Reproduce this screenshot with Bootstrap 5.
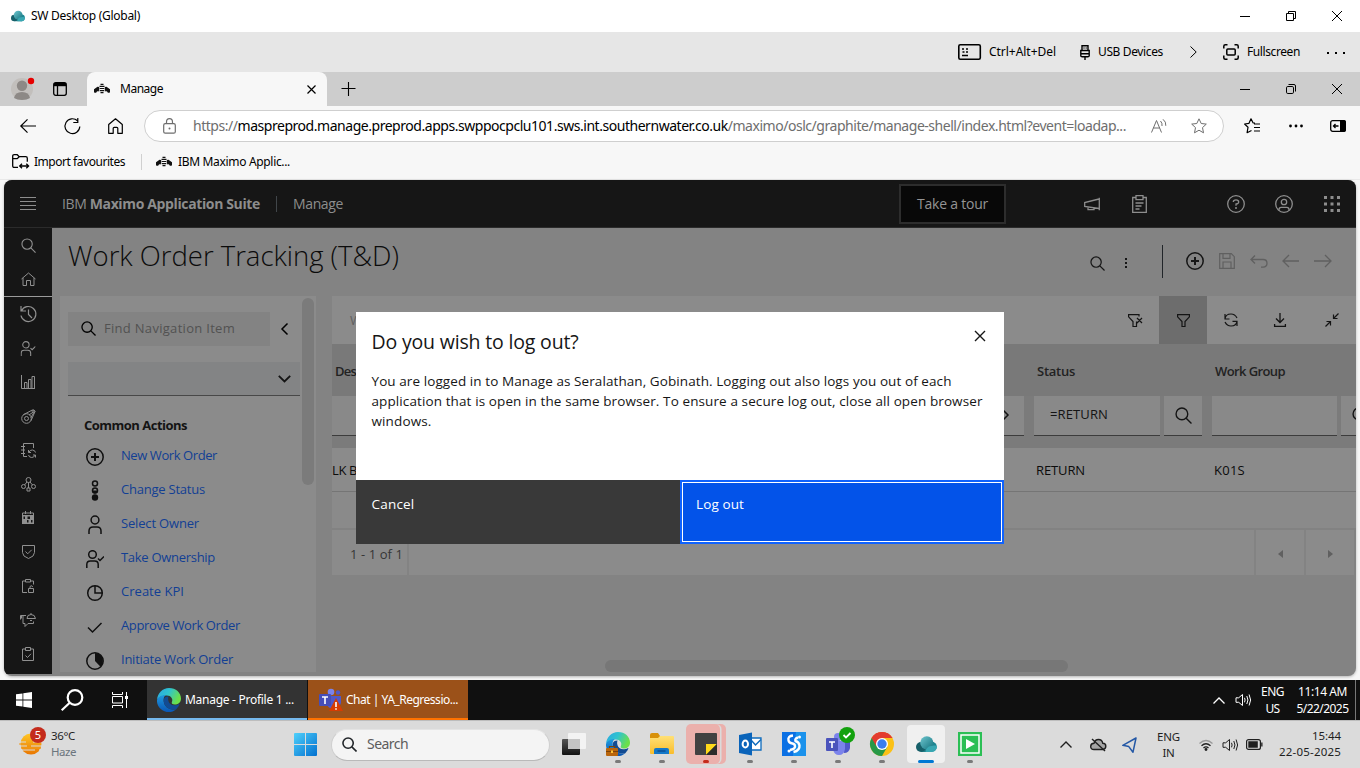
<!DOCTYPE html>
<html lang="en">
<head>
<meta charset="utf-8">
<meta name="viewport" content="width=device-width, initial-scale=1">
<title>SW Desktop (Global)</title>
<link href="https://cdn.jsdelivr.net/npm/bootstrap@5.3.0/dist/css/bootstrap.min.css" rel="stylesheet">
<style>
  body{width:1360px;height:768px;overflow:hidden;background:#f7f7f7;color:#000;font:12px/16px "Noto Sans","Open Sans",sans-serif}
  svg{display:block;flex:none;fill:none;stroke:currentColor;overflow:visible}
  svg .f{fill:currentColor;stroke:none}
  [data-w]{white-space:nowrap;display:inline-block;justify-self:start}
  .bar{display:grid;align-items:center;justify-items:start}
  /* outer client window */
  .client-title{height:32px;background:#fff;grid-template-columns:11px 20px 1191px 46px 46px 46px}
  .client-tools{height:40px;background:#e6e6e6;grid-template-columns:958px 31px 91px 18px 92px 33px 24px 80px 33px}
  .tabs-bar{height:34px;background:#cdcdcd;grid-template-columns:11px 42px 34px 254px 881px 46px 46px 46px}
  .win-btn{justify-self:center}
  .edge-tab{height:34px;width:240px;background:#f7f7f7;border-radius:8px 8px 0 0;display:grid;grid-template-columns:7px 26px 187px 20px;align-items:center}
  .address{height:40px;grid-template-columns:20px 44px 44px 36px 1100px 45px 41px 30px}
  .pill{height:32px;width:1080px;border:1px solid #cfcfcf;border-radius:16px;background:#fff;grid-template-columns:18px 30px 958px 40px 30px;color:#6e6e6e;font-size:14px}
  .favs{height:34px;grid-template-columns:12px 22px 107px 15px 22px 200px;border-bottom:1px solid #e9e9e9;padding-bottom:2px}
  .vsep{width:1px;height:16px;background:#d0d0d0}
  /* Maximo application */
  .suite{margin:0 4px;height:496px;background:#838383;border-radius:8px;overflow:hidden;position:relative;font-family:"Open Sans","Noto Sans",sans-serif;font-size:13px;color:#141414;box-shadow:0 1px 3px #0004}
  .suite-head{height:48px;background:#161616;color:#8d8d8d;border-bottom:1px solid #2b2b2b;font-size:14px;grid-template-columns:16px 42px 214px 17px 606px 185px 48px 95px 48px 49px 32px}
  .tour{width:107px;height:40px;border:2px solid #2d2d2d;background:#080808;padding-left:16px;color:#949494}
  .rail{width:48px;height:446px;background:#161616;color:#909090}
  .rail-slot{height:34px;display:flex;align-items:center;justify-content:center}
  .rail hr{margin:0;border:0;height:1px;background:#9b9b9b;opacity:1}
  .page-head{height:68px;grid-template-columns:16px 1022px 34px 38px 24px 33px 31px 32px 32px 42px;color:#161616;padding-bottom:2px}
  .page-name{font-size:27.5px;font-weight:300;line-height:34px;margin-bottom:10px;color:#0b0b0b}
  .off{color:#606060}
  .nav-panel{width:256px;height:376px;margin-left:8px;background:#8b8b8b;overflow:hidden;padding:0 2px 0 8px}
  .find{width:202px;height:34px;background:#838383;color:#525252;grid-template-columns:13px 23px 166px;padding-bottom:2px}
  .pick{width:232px;height:34px;background:#838485;border-bottom:1px solid #484848;margin-top:16px;padding-right:9px}
  .thumb{width:12px;height:187px;border-radius:6px;background:#7b7b7b;margin-top:2px}
  .acts{height:34px;grid-template-columns:18px 35px 180px;color:#123f94}
  .acts svg{color:#101010;margin-top:3px}
  .grid-area{width:1024px;margin-left:16px;overflow:hidden}
  .t-tools{height:48px;background:#8b8b8b;grid-template-columns:18px 778px 31px 48px 17px 50px 51px 31px}
  .on{width:48px;height:48px;background:#6d6d6d;display:grid;place-items:center}
  .t-head{height:52px;background:#797979;grid-template-columns:3px 702px 178px 141px;font-weight:600;color:#222;padding-top:2px}
  .t-filter{height:52px;background:#7b7b7b;align-items:start;grid-template-columns:692px 10px 130px 48px 129px 20px}
  .cellbox{height:40px;background:#898989;border-bottom:1px solid #3c3c3c;display:flex;align-items:center;padding-bottom:1px}
  .t-row{height:44px;background:#8b8b8b;border-bottom:1px solid #757575;grid-template-columns:704px 178px 142px;color:#0c0c0c}
  .t-gap{height:38px;background:#8a8a8a;border-bottom:2px solid #828282}
  .pager{height:45px;background:#8b8b8b;grid-template-columns:77px 847px 50px 50px;color:#363636}
  .pager>div{border-right:2px solid #838383;height:45px;width:100%;display:flex;align-items:center;padding-top:2px}
  .hthumb{position:absolute;left:601px;top:480px;width:463px;height:12px;border-radius:6px;background:#777}
  .ask{position:absolute;left:352px;top:132px;width:648px;height:232px;background:#fff;color:#161616;z-index:2}
  .ask-body{height:168px;padding:19px 15.5px 0;font-size:13.5px;line-height:20px}
  .ask-title{font-size:19.5px;line-height:22px;margin-bottom:18px}
  .ask-btn{height:64px;color:#fff;font-size:13.5px;padding:14px 0 0 15.5px;line-height:20px;border:0;border-radius:0;text-align:left}
  .ask-no{width:324px;background:#393939}
  .ask-yes{width:324px;background:#0353e9;border:2px solid #0f62fe;box-shadow:inset 0 0 0 1px #fff;padding:12px 0 0 14px}
  /* remote taskbar */
  .remote{margin-top:4px;height:40px;background:#101010;color:#fff;grid-template-columns:16px 45px 51px 35px 161px 905px 22px 26px 34px 60px 5px}
  .task{width:160px;height:40px;background:#333;border-bottom:2px solid #76b9ed;grid-template-columns:10px 28px 122px;padding-top:1px}
  .task-hot{background:#9b5119;border-color:#ff7200;grid-template-columns:11px 27px 122px}
  .two{line-height:17px;text-align:center;width:100%}
  /* local taskbar */
  .local{height:48px;background:#dbdbdb;border-top:1px solid #bdbdbd;color:#1f1f1f;font-size:11.5px;grid-template-columns:17px 34px 243px 37px 221px 508px 30px 32px 35px 42px 23px 24px 32px 80px}
  .seek{width:219px;height:32px;border-radius:16px;background:#f4f4f4;border:1px solid #cfcfcf;border-top-color:#e4e4e4;border-bottom-color:#b9b9b9;grid-template-columns:10px 25px 180px;font-size:14px;color:#5c5c5c;padding-bottom:1px}
  .app{width:44px;height:47px;display:flex;flex-direction:column;align-items:center;padding-top:11px;position:relative}
  .app::after{content:"";width:6px;height:3px;border-radius:2px;background:#7a7a7a;margin-top:4px}
  .app.idle::after{display:none}
  .app.now::before{content:"";position:absolute;left:3px;top:4px;width:38px;height:38px;border-radius:4px;background:#f0f0f0}
  .app.now::after{width:16px;background:#0078d4;z-index:1}
  .app.alert-app::before{content:"";position:absolute;left:2px;top:3px;width:34px;height:40px;border-radius:5px;background:#ebb0ac;box-shadow:2px 0 0 -0.5px #dbdbdb,6px 0 0 #ebb0ac}
  .app.alert-app::after{background:#c42b1c;z-index:1}
  .app svg{position:relative}
  svg.multi{stroke:none}
  .stack{line-height:16px;margin-top:-2px}
</style>
</head>
<body>
<svg width="0" height="0" class="position-absolute">
  <defs>
    <linearGradient id="gCloud" x1="0" y1="0" x2="1" y2="1"><stop offset="0" stop-color="#6fc6cf"/><stop offset="1" stop-color="#12727d"/></linearGradient>
    <linearGradient id="gEdge" x1="0" y1="0" x2="1" y2=".4"><stop offset="0" stop-color="#2aa6e3"/><stop offset=".5" stop-color="#2fc3cf"/><stop offset="1" stop-color="#6be04a"/></linearGradient>
    <linearGradient id="gEdgeB" x1="0" y1="0" x2="0" y2="1"><stop offset="0" stop-color="#1f9ae0"/><stop offset="1" stop-color="#0a56b4"/></linearGradient>
    <linearGradient id="gWin" x1="0" y1="0" x2="1" y2="1"><stop offset="0" stop-color="#4fd0fb"/><stop offset="1" stop-color="#0270cf"/></linearGradient>
    <linearGradient id="gFold" x1="0" y1="0" x2="0" y2="1"><stop offset="0" stop-color="#ffe076"/><stop offset="1" stop-color="#f9bd2c"/></linearGradient>
    <linearGradient id="gHaze" x1="0" y1="0" x2="0" y2="1"><stop offset="0" stop-color="#ffc726"/><stop offset="1" stop-color="#e97600"/></linearGradient>
    <linearGradient id="gDark" x1="0" y1="0" x2="0" y2="1"><stop offset="0" stop-color="#555"/><stop offset="1" stop-color="#111"/></linearGradient>
    <symbol id="bee" viewBox="0 0 16 12"><g fill="#111" stroke="none"><path d="M5.200 4 3.500 3.800 0 6.300V9.300q1.500 1 2.500 0l.6-1 1.400.3L5.200 7zM10.800 4l1.700-.2L16 6.300v3q-1.500 1-2.500 0l-.6-1-1.400.3-.7-1.600z"/><path d="M6.500.800h3v1.100h-3zM5.500 2.800h5v1.200h-5zM5.700 4.900h4.600v1.200H5.700zM5.700 7h4.600v1.200H5.700zM6.500 9.100h3v1.200h-3z"/></g></symbol>
    <symbol id="cloud" viewBox="0 0 21 18"><g stroke="none"><circle cx="15.800" cy="11.700" r="5" fill="#1b8591"/><path d="M5 17h11V9L6 8z" fill="#20808a"/><circle cx="5" cy="12" r="5" fill="#165f69"/><circle cx="10.800" cy="7.800" r="6.600" fill="url(#gCloud)"/><path d="M15 11a6 6 0 0 0-5.500 6h6.300a5 5 0 0 0 4.900-6.200A9 9 0 0 0 15 11z" fill="#38a7b2"/></g></symbol>
    <symbol id="edge" viewBox="0 0 24 24"><g stroke="none"><path d="M0 12C.5 5 5.500 0 12 0c7 0 12 4.800 12 10.500 0 4-3 6-6.300 6-2.500 0-3.500-1-2.800-2.500 1.600-3-1-6.500-5-6.500C5 7.500 1 9.500 0 12z" fill="url(#gEdge)"/><path d="M0 12C.8 9 4.600 6.800 8.800 6.900 6.500 8.500 6 12 7.200 15.500c1.600 4.500 6.300 6.500 11.800 5.900C17 23 14.500 24 12 24 5 24-.5 18.500 0 12z" fill="url(#gEdgeB)"/><path d="M7.200 15.500C6 11.500 7 8.400 11.500 8.500c-1.500 4.300 1.500 9.600 6.800 8.700 2-.2 3.200-.9 4-1.200.5.300-1.300 3.600-3.300 5.400-5.500.6-10.200-1.400-11.800-5.900z" fill="#124b93"/></g></symbol>
    <symbol id="vol" viewBox="0 0 16 14"><path d="M.5 4.800h2.700L7 1.500v11L3.200 9.300H.5zM9 4.800q1.200 2.200 0 4.500M11.300 3q2.300 4 0 8M13.600 1.500q3 5.500 0 11"/></symbol>
    <symbol id="lens" viewBox="0 0 16 16"><circle cx="6.500" cy="6.500" r="5.500"/><path d="m10.500 10.500 5 5"/></symbol>
    <symbol id="star" viewBox="0 0 16 16"><path stroke-linejoin="round" d="m8 .8 2.200 4.700 5.100.6-3.800 3.500 1 5.200L8 12.200l-4.500 2.600 1-5.200L.7 6.100l5.100-.6z"/></symbol>
    <symbol id="plusring" viewBox="0 0 18 18"><circle cx="9" cy="9" r="8.200"/><path stroke-width="2" d="M9 5v8M5 9h8"/></symbol>
    <symbol id="owner" viewBox="0 0 18 18"><circle cx="6.500" cy="4.500" r="3.800"/><path d="M.8 18v-3.500q0-3.500 3.500-3.500h4.400q3.500 0 3.500 3.500V18M12 8.500l2 2 4-4"/></symbol>
  </defs>
</svg>

<header class="bar client-title"><i></i>
  <svg width="14" height="12" viewBox="0 0 21 18"><use href="#cloud"/></svg>
  <span data-w="109">SW Desktop (Global)</span>
  <svg class="win-btn" width="10" height="10"><path d="M0 5.500h10"/></svg>
  <svg class="win-btn" width="10" height="10"><path d="M.5 2.500h7v7h-7zM2.500 2.500v-2h7v7h-2"/></svg>
  <svg class="win-btn" width="10" height="10"><path d="m0 0 10 10M10 0 0 10"/></svg>
</header>

<div class="bar client-tools"><i></i>
  <svg width="24" height="16" stroke-width="1.600"><rect x=".8" y=".8" width="21.500" height="14.400" rx="1.500"/><path d="M4 5h2M8 5h2M4.500 8h2M8 8h2M4 11.500h6"/></svg>
  <span data-w="67">Ctrl+Alt+Del</span>
  <svg width="10" height="15" stroke-width="1.400"><path d="M2 5.500V.8h6v4.700M.8 5.500h8.400v5.200q0 1-1.500 1H2.300q-1.500 0-1.500-1zM.8 8.700h8.400M5 11.500V15M4 2.500v1M6.200 2.500v1"/></svg>
  <span data-w="65">USB Devices</span>
  <svg width="7" height="12"><path d="m.5.500 5.700 5.500L.5 11.500"/></svg>
  <svg width="16" height="16" stroke-width="1.500"><path d="M.8 4.500V2.300Q.8.800 2.300.8h2.200M11.500.8h2.200q1.500 0 1.500 1.500v2.200M15.200 11.500v2.200q0 1.500-1.500 1.500h-2.200M4.500 15.200H2.300q-1.500 0-1.500-1.500v-2.200"/><rect x="3.800" y="5" width="8.400" height="6" rx="1"/></svg>
  <span data-w="53">Fullscreen</span>
  <svg width="19" height="2"><path class="f" d="M0 1h2v2H0zM8 1h2v2H8zM16 1h2v2h-2z"/></svg>
</div>

<div class="bar tabs-bar"><i></i>
  <svg width="23" height="22" class="multi"><circle cx="11" cy="11" r="11" fill="#c2bfbc"/><circle cx="11" cy="7.800" r="5.200" fill="#8d8986"/><path d="M3 20q1-6 8-6t8 6q-3 2-8 2t-8-2z" fill="#8d8986"/><circle cx="20" cy="3" r="3.200" fill="#e60000"/></svg>
  <svg width="14" height="14" stroke-width="1.300"><rect x=".7" y=".7" width="12.600" height="12.600" rx="2"/><path d="M4.500 4v9.500"/><path class="f" d="M1 1h12v3.200H1z"/></svg>
  <div class="edge-tab"><i></i>
    <svg width="16" height="12"><use href="#bee"/></svg><span data-w="43">Manage</span>
    <svg width="9" height="9" stroke-width="1.200"><path d="m.5.500 8 8M8.500.5l-8 8"/></svg>
  </div>
  <svg width="14" height="14" stroke-width="1.100"><path d="M7.500 0v14M.5 6.500h14"/></svg>
  <svg class="win-btn" width="10" height="10"><path d="M0 5.500h10"/></svg>
  <svg class="win-btn" width="10" height="10"><rect x=".5" y="2.500" width="7" height="7" rx="1.300"/><path d="M2.500.500H8q1.500 0 1.500 1.500v5.500"/></svg>
  <svg class="win-btn" width="10" height="10"><path d="m0 0 10 10M10 0 0 10"/></svg>
</div>

<nav class="bar address"><i></i>
  <svg width="16" height="14" stroke-width="1.200"><path d="M16 7H.8M7.500.3.800 7l6.700 6.700"/></svg>
  <svg width="17" height="17" stroke-width="1.200"><path d="M13.500 2.800A7.400 7.400 0 1 0 15.800 8.500M13.800 0v4.500H9.300"/></svg>
  <svg width="15" height="16" stroke-width="1.200"><path stroke-linejoin="round" d="M.7 6.500 7.500.8l6.800 5.700v8.800H9.800v-5q0-1-1-1H6.200q-1 0-1 1v5H.7z"/></svg>
  <div class="bar pill"><i></i>
    <svg width="13" height="16" stroke-width="1.200"><rect x=".7" y="5.700" width="11.600" height="9.500" rx="1.500"/><path d="M3.500 5.500V4q0-3.300 3-3.300t3 3.300v1.500"/><circle class="f" cx="6.500" cy="10.500" r="1"/></svg>
    <span data-w="933">https://<span class="text-black">maspreprod.manage.preprod.apps.swppocpclu101.sws.int.southernwater.co.uk</span>/maximo/oslc/graphite/manage-shell/index.html?event=loadap...</span>
    <svg width="16" height="15"><path d="m.5 13.500 5-12 5 12M2.300 9h6.400M9.500 2q2 2 1.500 5M12 .3q3.300 2.500 2.800 6.500" /></svg>
    <svg width="16" height="16"><use href="#star"/></svg>
  </div>
  <svg width="16" height="16" stroke-width="1.200"><path stroke-linejoin="round" d="M11 5 9 4.800 7 .8 5 5.300.6 6l3.400 3.300-.9 5.400L7.500 12.500M10 6h6M10 9.500h6M10 13h6"/></svg>
  <svg width="14" height="4"><g class="f"><circle cx="1.500" cy="2" r="1.400"/><circle cx="7" cy="2" r="1.400"/><circle cx="12.500" cy="2" r="1.400"/></g></svg>
  <svg width="16" height="12" stroke-width="1.300"><rect x=".7" y=".7" width="14.600" height="10.600" rx="2"/><path class="f" d="M10 0h4q2 0 2 2v8q0 2-2 2h-4z"/><path d="M8.500 6h-5M5.500 4l-2 2 2 2"/></svg>
</nav>

<div class="bar favs"><i></i>
  <svg width="17" height="15" stroke-width="1.300"><path d="M6 13.300H2.200Q.7 13.300.7 11.800V2.200Q.7.700 2.200.7h3l2 2h6.600q1.500 0 1.500 1.500v3.500M.7 4.700h4.500l2-2M8 12h8.500M10 9.700 7.700 12l2.300 2.300M14.300 9.700l2.300 2.300-2.300 2.300"/></svg>
  <span data-w="91">Import favourites</span>
  <div class="vsep"></div>
  <svg width="16" height="12"><use href="#bee"/></svg>
  <span data-w="112">IBM Maximo Applic...</span>
</div>

<main class="suite">
  <div class="bar suite-head"><i></i>
    <svg width="16" height="13"><path d="M0 .5h16M0 4.500h16M0 8.500h16M0 12.500h16"/></svg>
    <span data-w="198">IBM <b>Maximo Application Suite</b></span>
    <div class="vsep bg-secondary opacity-50"></div>
    <span data-w="50">Manage</span>
    <div class="tour d-flex align-items-center"><span data-w="71">Take a tour</span></div>
    <svg width="17" height="14" stroke-width="1.300"><path d="M15.300.700v12.600M15 2 .7 5.500v4L15 11.500M4 10v2.700h6V11"/></svg>
    <svg width="15" height="18" stroke-width="1.300"><path d="M4 2.500H.7v14.800h13.600V2.500H11M4 .7h7v4H4zM3.500 8h8M3.500 11h6M3.500 14h4"/></svg>
    <svg width="18" height="18" stroke-width="1.300"><circle cx="9" cy="9" r="8.300"/><path d="M6.300 7q0-2.200 2.700-2.200T11.700 7Q11.700 8.800 9 9v1.800"/><circle class="f" cx="9" cy="13" r="1"/></svg>
    <svg width="18" height="18" stroke-width="1.300"><circle cx="9" cy="9" r="8.300"/><circle cx="9" cy="7" r="2.700"/><path d="M4 15.500v-1q0-2.200 2.200-2.200h5.600q2.200 0 2.200 2.200v1"/></svg>
    <svg width="16" height="16"><path class="f" d="M0 0h3v3H0zM6.500 0h3v3h-3zM13 0h3v3h-3zM0 6.500h3v3H0zM6.500 6.500h3v3h-3zM13 6.500h3v3h-3zM0 13h3v3H0zM6.500 13h3v3h-3zM13 13h3v3h-3z"/></svg>
  </div>

  <div class="d-flex">
    <aside class="rail flex-shrink-0">
      <div class="rail-slot"><svg width="15" height="15" viewBox="0 0 16 16" stroke-width="1.200"><use href="#lens"/></svg></div>
      <div class="rail-slot"><svg width="15" height="14"><path d="M.5 7 7.500 1l7 6M2 6v7.500h3.500V8.500h4v5H13V6"/></svg></div>
      <hr>
      <div class="rail-slot"><svg width="17" height="16" stroke-width="1.200"><path d="M1.500 5A7.500 7.500 0 1 1 1 9.500M1 0v5h5M8.500 3.500V8.500l3.500 3.500"/></svg></div>
      <div class="rail-slot"><svg width="16" height="15" viewBox="0 0 18 18" stroke-width="1.300"><use href="#owner"/></svg></div>
      <div class="rail-slot"><svg width="14" height="14"><path d="M.5 0v13.500H14M3.500 13V7.500H6V13M7.500 13V4.500H10V13M11 13V1.500h2.500V13"/></svg></div>
      <div class="rail-slot"><svg width="15" height="15"><circle cx="5.500" cy="9.500" r="4.800"/><circle cx="5.500" cy="9.500" r="2"/><path d="m2.300 5.800 9-4.800q2.200-.5 2.700 1.500l-4 9.200M8 6l5-3.500M10 8.500l2.800-5"/><circle cx="12.500" cy="2.500" r="1.300"/></svg></div>
      <div class="rail-slot"><svg width="15" height="15"><path d="M12.500 5V.5h-10v13H6M0 3.500h4M0 7h4M0 10.500h4M7.500 9.500V7M7.500 9.500H10M7.800 9.300Q9 6.800 11.500 7t3 2.500M14.500 14.500V12H12M14.200 12q-1 2.500-3.500 2.500T7.500 12"/></svg></div>
      <div class="rail-slot"><svg width="15" height="15"><circle cx="7.500" cy="3" r="2.500"/><circle cx="2.500" cy="9.500" r="2"/><circle cx="12.500" cy="9.500" r="2"/><path d="M6 11h3v3H6zM7.500 5.500V11M6 5 3.500 8M9 5l2.500 3"/></svg></div>
      <div class="rail-slot"><svg width="12" height="14"><path d="M.5 2h11v10.500H.5zM3.500 0v3M8.500 0v3"/><path class="f" fill-rule="evenodd" d="M0 4h12v9H0zM5.500 5.500v2.500H8V5.500zM1.500 5.500V8H3V5.500zM5 9v2.500h1.500V9zM9 9v2.500h1.500V9z"/></svg></div>
      <div class="rail-slot"><svg width="13" height="14"><path d="M.5.500h12v7q0 4-6 6-6-2-6-6zM3.500 6.500l2.200 2.300 4-4"/></svg></div>
      <div class="rail-slot"><svg width="12" height="14"><path d="M3 2H.5v11.500H5M9 2h2.500v3.500M3.500.5h5v2.500h-5zM6.500 9.500h5v4h-5zM8 9.500V8q.2-1.300 1.300-1.300T10.500 8"/></svg></div>
      <div class="rail-slot"><svg width="16" height="14"><path d="M6 2.500H.5v4M1.500 2.500v3M3 3v7.500h2v3l3-3h5.500V8.500M7 5.500h8.500Q15 1.500 11 1.500T7 5.500zM11 0v1.500M10 7.500h2"/></svg></div>
      <div class="rail-slot"><svg width="12" height="14"><path d="M3.500 2H.5v11.500h11V2h-3M3.500.5h5v3h-5zM3.500 8.500 5.500 10.500l3.500-3.700"/></svg></div>
    </aside>

    <div class="flex-grow-1">
      <div class="bar page-head"><i></i>
        <h1 class="page-name" data-w="331">Work Order Tracking (T&amp;D)</h1>
        <svg class="mt-1" width="15" height="15" viewBox="0 0 16 16" stroke-width="1.300"><use href="#lens"/></svg>
        <svg class="mt-1" width="4" height="12"><path class="f" d="M1 1h2v2H1zM1 5h2v2H1zM1 9h2v2H1z"/></svg>
        <div class="vsep bg-dark h-50"></div>
        <svg width="18" height="18" stroke-width="1.500"><use href="#plusring"/></svg>
        <svg class="off" width="16" height="16" stroke-width="1.200"><path d="M.7.7h11.600l3 3v11.600H.7zM4 .7v4.600h7V.7M4 15.300V9h8v6.300"/></svg>
        <svg class="off" width="18" height="13" stroke-width="1.300"><path d="M1 4.500h12q4 0 4 3.800t-4 3.800h-2M5 .5l-4 4 4 4"/></svg>
        <svg class="off" width="17" height="14" stroke-width="1.300"><path d="M17 7H1M7 1 1 7l6 6"/></svg>
        <svg class="off" width="18" height="14" stroke-width="1.300"><path d="M0 7h17M11 1l6 6-6 6"/></svg>
      </div>

      <div class="d-flex align-items-start">
        <aside class="nav-panel d-flex">
          <div style="width:234px" class="flex-shrink-0">
            <div class="d-flex align-items-center" style="margin-top:16px">
              <div class="bar find"><i></i><svg width="15" height="15" viewBox="0 0 16 16" stroke-width="1.400" class="text-black"><use href="#lens"/></svg><span data-w="131">Find Navigation Item</span></div>
              <svg class="text-black" style="margin-left:11px" width="7" height="12" stroke-width="1.500"><path d="M6.500.5 1 6l5.500 5.500"/></svg>
            </div>
            <div class="pick d-flex align-items-center justify-content-end"><svg width="13" height="8" stroke-width="1.800"><path d="m.8.800 5.700 5.700L12.200.8"/></svg></div>
            <div class="ps-3 fw-bold" style="margin-top:20px;line-height:18px"><span data-w="103">Common Actions</span></div>
            <div id="actions" class="mt-1"></div>
          </div>
          <div class="thumb"></div>
        </aside>

        <section class="grid-area">
          <div class="bar t-tools"><i></i><span class="off">W</span>
            <svg width="15" height="13" stroke-width="1.200"><path d="M11 2.500V.6H.6v2.200L5 7.500v5h3.500v-5M9 4l5 5M14 4 9 9"/></svg>
            <div class="on"><svg width="13" height="13" stroke-width="1.200"><path d="M.6.600h11.800v2.200L8 7.500v5H5v-5L.6 2.800z"/></svg></div><i></i>
            <svg width="14" height="14" stroke-width="1.200"><path d="M1 6Q1.500 1 7 1q4 0 6 4M13 8q-.5 5-6 5-4 0-6-4M1 1v5h4.500M13 13V8.300H8.500"/></svg>
            <svg width="12" height="14" stroke-width="1.300"><path d="M6 0v9.500M2 5.500l4 4 4-4M.6 11v2.300h10.800V11"/></svg>
            <svg width="14" height="14" stroke-width="1.200"><path d="m.5 13.500 5-5M1.500 8.500h4v4M13.500.5l-5 5M12.500 5.500h-4v-4"/></svg>
          </div>
          <div class="bar t-head"><i></i><span data-w="21">Des</span><span data-w="38">Status</span><span data-w="70">Work Group</span></div>
          <div class="bar t-filter">
            <div class="cellbox w-100 justify-content-end"><svg width="6" height="10" stroke-width="1.500" style="margin-right:15px"><path d="m.5.500 4.500 4.500L.5 9.500"/></svg></div><i></i>
            <div class="cellbox ps-3" style="width:126px;padding-bottom:3px"><span data-w="58">=RETURN</span></div>
            <div class="cellbox justify-content-center" style="width:38px"><svg width="17" height="17" viewBox="0 0 16 16" stroke-width="1.300"><use href="#lens"/></svg></div>
            <div class="cellbox" style="width:125px"></div>
            <div class="cellbox" style="width:38px;padding-left:11px"><svg width="17" height="17" viewBox="0 0 16 16" stroke-width="1.300"><use href="#lens"/></svg></div>
          </div>
          <div class="bar t-row"><span data-w="25">LK B</span><span data-w="49">RETURN</span><span data-w="31">K01S</span></div>
          <div class="t-gap"></div>
          <div class="bar pager"><div style="padding-left:18px"><span data-w="53">1 - 1 of 1</span></div><div></div>
            <div class="justify-content-center off"><svg width="5" height="8"><path class="f" d="M5 0v8L0 4z"/></svg></div>
            <div class="justify-content-center off"><svg width="5" height="8"><path class="f" d="M0 0v8l5-4z"/></svg></div></div>
        </section>
      </div>
    </div>
  </div>
  <div class="hthumb"></div>

  <div class="ask" role="dialog">
    <div class="ask-body position-relative">
      <div class="ask-title"><span data-w="207">Do you wish to log out?</span></div>
      <div><span data-w="580">You are logged in to Manage as Seralathan, Gobinath. Logging out also logs you out of each</span><br>
      <span data-w="611">application that is open in the same browser. To ensure a secure log out, close all open browser</span><br>
      <span data-w="60">windows.</span></div>
      <svg class="position-absolute" style="right:19px;top:19px" width="10" height="10" stroke-width="1.400"><path d="m0 0 10 10M10 0 0 10"/></svg>
    </div>
    <div class="d-flex">
      <button class="ask-btn ask-no d-flex align-items-start"><span data-w="43">Cancel</span></button>
      <button class="ask-btn ask-yes d-flex align-items-start"><span data-w="48">Log out</span></button>
    </div>
  </div>
</main>

<div class="bar remote"><i></i>
  <svg width="16" height="16"><path class="f" d="M0 2.300 6.500 1.400v6.200H0zM7.300 1.200 16 0v7.600H7.300zM0 8.400h6.500v6.200L0 13.700zM7.300 8.400H16V16l-8.700-1.200z"/></svg>
  <svg width="23" height="22" stroke-width="2.200"><circle cx="14" cy="8.500" r="7.300"/><path d="m8.700 13.700-8 7.500"/></svg>
  <svg width="16" height="16"><path d="M.5 0v2.500h10V0M.5 16v-2.500h10V16M.5 4.500h10v6.500H.5zM14.500 0v16"/><path class="f" d="M13 4h3v3h-3z"/></svg>
  <div class="bar task"><i></i><svg width="24" height="24"><use href="#edge"/></svg><span data-w="109">Manage - Profile 1 ...</span></div>
  <div class="bar task task-hot"><i></i>
    <svg width="24" height="24" class="multi"><circle cx="12" cy="4" r="3.300" fill="#7b83eb"/><circle cx="19" cy="4.500" r="2.200" fill="#5059c9"/><path d="M8 8h14v7q-2 6-8 6-6-1-6-6z" fill="#5059c9"/><rect x="0" y="6" width="12" height="12" rx="1" fill="#464eb8"/><path d="M3 9h6M6 9v7" stroke="#fff" stroke-width="1.600"/><path d="m17 10 7 13H10z" fill="#d83b01"/><path d="M17 14v5M17 20.200v1.600" stroke="#fff" stroke-width="1.600"/></svg>
    <span data-w="112">Chat | YA_Regressio...</span></div>
  <svg width="12" height="7" stroke-width="1.300"><path d="m.5 6.500 5.500-5.500 5.500 5.500"/></svg>
  <svg width="17" height="14"><use href="#vol"/></svg>
  <div class="two" style="width:23px"><span data-w="23">ENG</span><span data-w="14">US</span></div>
  <div class="two" style="width:55px"><span data-w="49">11:14 AM</span><span data-w="52">5/22/2025</span></div>
  <div style="width:1px;height:40px;background:#777"></div>
</div>

<footer class="bar local"><i></i>
  <svg width="30" height="28" class="multi"><circle cx="14" cy="13" r="10.500" fill="url(#gHaze)"/><path d="M0 11h9M16 11h10M2 15h8M14 15h12M4 19h14M22 19h4" stroke="#dbdbdb" stroke-width="1.200"/><path d="M2 13h12M4 17h20" stroke="#f29a1c"/><circle cx="21" cy="4" r="8" fill="#c42b1c"/><text x="21" y="8" fill="#fff" font-size="11" text-anchor="middle">5</text></svg>
  <div class="stack"><span data-w="24">36°C</span><br><span class="text-secondary" data-w="25">Haze</span></div>
  <svg width="23" height="23" class="multi"><path d="M0 1q0-1 1-1h10v11H0zM12 0h10q1 0 1 1v10H12zM0 12h11v11H1q-1 0-1-1zM12 12h11v10q0 1-1 1H12z" fill="url(#gWin)"/></svg>
  <div class="bar seek"><i></i><svg width="15" height="15" viewBox="0 0 16 16" stroke-width="1.700" class="text-dark"><use href="#lens"/></svg><span data-w="41">Search</span></div>
  <div class="d-flex">
    <div class="app idle"><svg width="24" height="24" class="multi"><rect x="0" y="7" width="18" height="16" rx="1" fill="url(#gDark)"/><rect x="6" y="1" width="18" height="16" rx="1" fill="#f6f6f6" fill-opacity=".88"/><path d="M6 7h12v10H6z" fill="#c4c4c4"/></svg></div>
    <div class="app"><svg width="24" height="24" class="multi"><use href="#edge"/><rect x="0" y="16" width="12" height="8" rx="1" fill="#b9650c"/><path d="M3.500 16v-1.500h5V16" stroke="#7b4207" stroke-width="1.200"/><path d="M0 19.500h12" stroke="#7b4207"/><path d="M5 18.500h2V21H5z" fill="#ffc53a"/></svg></div>
    <div class="app"><svg width="24" height="24" class="multi"><path d="M0 3q0-2 2-2h6l2 3v3H0z" fill="#d8910a"/><path d="M0 6h8l2-2h13q1 0 1 1v16q0 1-1 1H1q-1 0-1-1z" fill="url(#gFold)"/><path d="M4 22v-4q0-2 2-2h11q2 0 2 2v4z" fill="#1478c8"/><path d="M7.500 19h8" stroke="#0b4f94" stroke-width="1.500"/></svg></div>
    <div class="app alert-app"><svg width="24" height="24" class="multi"><rect x="1" y="1" width="22" height="22" rx="1" fill="#414141"/><path d="M12 12h11L12 23z" fill="#ffd91a"/><path d="M23 12v11H12z" fill="#2b2b2b"/></svg></div>
    <div class="app"><svg width="24" height="24" class="multi"><path d="M12 6h11v12H12z" fill="#fff" stroke="#0f6cbd" stroke-width="1.300"/><path d="m13 8 4.500 5L23 7.500" stroke="#0f6cbd" stroke-width="1.500"/><path d="m1 3 13-2.500v23L1 21z" fill="#0a64ba"/><ellipse cx="7.300" cy="12" rx="2.700" ry="3.500" stroke="#fff" stroke-width="2"/></svg></div>
    <div class="app"><svg width="24" height="24" class="multi"><path d="M0 0h24v24H0z" fill="#0b70e4"/><path d="M14 0h10v24H11z" fill="#1b92ec"/><path d="M11 3.500Q5.500 4 6.500 8.500q.5 2.500 4 3 2.500.5 2.500 3t-5 3.500M16 5.500q-3.500 1-2.500 3.500 3.500 1 4 4.500.5 5-6 6.500" stroke="#fff" stroke-width="2.400"/><circle cx="17.500" cy="5" r="1.500" fill="#fff"/><circle cx="7" cy="19" r="1.500" fill="#fff"/></svg></div>
    <div class="app"><svg width="30" height="24" viewBox="-3 0 30 24" class="multi"><circle cx="12" cy="5" r="4" fill="#7b83eb"/><path d="M15 9h9v7q-1 5-6 5z" fill="#5059c9"/><path d="M7 9h12v8q-1 6-6 6t-6-6z" fill="#7b83eb"/><rect x="0" y="6" width="12" height="13" rx="1" fill="#4b53bc"/><path d="M3 10h6M6 10v6" stroke="#fff" stroke-width="1.600"/><circle cx="21" cy="3" r="8" fill="#13a10e"/><path d="m17.500 3 2.500 2.500 4.500-4.500" stroke="#fff" stroke-width="1.800"/></svg></div>
    <div class="app"><svg width="24" height="24" class="multi"><circle cx="12" cy="12" r="12" fill="#fbc116"/><path d="M12 12 1.600 6A12 12 0 0 1 22.400 6H12z" fill="#e33b2e"/><path d="M1.600 6A12 12 0 0 0 12 24l5.200-9-5.200-3z" fill="#279847"/><path d="M12 6h10.400A12 12 0 0 0 1.600 6l4.600 8z" fill="#e33b2e"/><circle cx="12" cy="12" r="6" fill="#fff"/><circle cx="12" cy="12" r="4.700" fill="#3b7ded"/></svg></div>
    <div class="app now"><svg width="21" height="24" viewBox="0 0 21 18"><use href="#cloud"/></svg></div>
    <div class="app"><svg width="24" height="24" class="multi"><path d="M0 0h24v24H0z" fill="#2bbf55"/><path d="M3 3h18v18H3z" stroke="#fff" stroke-width="1.500"/><path d="m8 7 9 5-9 5z" fill="#fff"/></svg></div>
  </div>
  <svg width="12" height="7" stroke-width="1.400"><path d="m.5 6.500 5.500-5.500 5.500 5.500"/></svg>
  <svg width="17" height="14" stroke-width="1.400"><path d="M4 11.500q-3.300 0-3.300-3T4 5.300Q5 1.500 8.500 1.500T12.800 5.300q3 0 3 3t-3 3.200z" fill="#a5a5a5"/><path d="m2 1 13 12"/></svg>
  <svg width="15" height="16" stroke-width="1.500" color="#2458a6"><path stroke-linejoin="round" d="M14 1 .8 8.300l6 1.300 4.200 5.600z"/></svg>
  <div class="two stack mt-0" style="width:23px"><span data-w="23">ENG</span><span data-w="12">IN</span></div>
  <svg width="14" height="12" stroke-width="1.300"><path d="M.5 4.500q6.500-6 13 0" opacity=".35"/><path d="M2.500 6.800q4.500-4 9 0M4.500 9q2.500-2.300 5 0"/><circle class="f" cx="7" cy="10.500" r="1.400"/></svg>
  <svg width="17" height="14"><use href="#vol"/></svg>
  <svg width="17" height="11" stroke-width="1.200"><rect x=".6" y=".6" width="13.800" height="9.800" rx="2"/><path class="f" d="M2.300 2.300h9.500v6.400H2.300zM15.200 3.500h1.300v4h-1.300z"/></svg>
  <div class="stack text-end" style="width:63px"><span data-w="29">15:44</span><br><span data-w="62">22-05-2025</span></div>
</footer>

<script>
  // Navigation panel actions: label, label width, icon
  var acts = [
    ['New Work Order', 96, '<use href="#plusring"/>'],
    ['Change Status', 84, '<circle cx="9" cy="1.500" r="2.500"/><circle cx="9" cy="8.500" r="2.500"/><path class="f" d="M6 8.500h6q-.5 3-3 3t-3-3z"/><circle class="f" cx="9" cy="15.500" r="3.200"/>'],
    ['Select Owner', 78, '<circle cx="9" cy="4" r="3.900"/><path d="M3 18v-3q0-4 4-4h4q4 0 4 4v3"/>'],
    ['Take Ownership', 94, '<use href="#owner"/>'],
    ['Create KPI', 63, '<circle cx="9" cy="9" r="7.300"/><path d="M9 2v7h7"/>'],
    ['Approve Work Order', 119, '<path d="m2 9.500 4.500 4.500L15.500 5"/>'],
    ['Initiate Work Order', 112, '<circle cx="9" cy="9" r="8.200"/><path class="f" d="M9 1a8 8 0 0 1 5.500 13.700L9 9z"/>']
  ];
  document.getElementById('actions').innerHTML = acts.map(function (a) {
    return '<div class="bar acts"><i></i><svg width="18" height="18" stroke-width="1.500">' + a[2] +
      '</svg><span data-w="' + a[1] + '">' + a[0] + '</span></div>';
  }).join('');

  document.querySelectorAll('[data-w]').forEach(function (el) {
    var gap = (el.dataset.w - el.getBoundingClientRect().width) / el.textContent.length;
    el.style.letterSpacing = gap.toFixed(3) + 'px';
  });
</script>
</body>
</html>
